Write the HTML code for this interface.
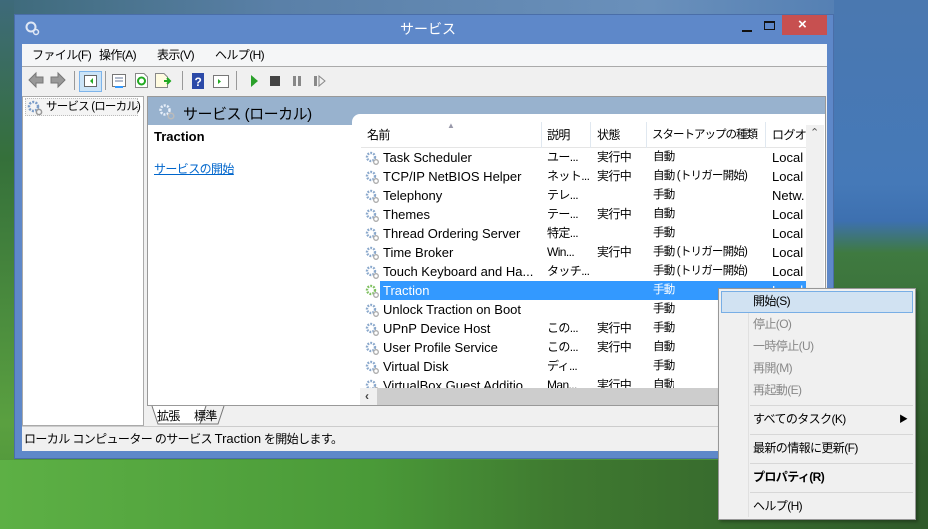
<!DOCTYPE html><html><head><meta charset="utf-8"><style>
*{margin:0;padding:0;box-sizing:border-box}
body{width:928px;height:529px;overflow:hidden;position:relative;font-family:"Liberation Sans","Noto Sans CJK JP",sans-serif;font-size:12px;color:#000;
background:linear-gradient(180deg,#6f8fb5 0,#4a78b0 10%,#3b6fb0 45%,#4c7fa8 50%,#3c7a3a 58%,#5aa040 75%,#3f8a30 100%)}
.a{position:absolute}
.g{position:absolute;width:14px;height:14px}
.t{position:absolute;white-space:nowrap;line-height:15px}
.j{letter-spacing:-0.6px}
</style></head><body>
<div class="a" style="left:0;top:0;width:928px;height:14px;background:linear-gradient(90deg,#3e6a7a,#5a80a8 30%,#6a90bb 70%,#4a78b0)"></div>
<div class="a" style="left:0;top:0;width:14px;height:529px;background:linear-gradient(180deg,#3e6a7a,#35703a 30%,#5aa040 80%,#4a9036)"></div>
<div class="a" style="left:0;top:460px;width:928px;height:69px;background:linear-gradient(90deg,#5db045,#4a9a38 40%,#3f7a30 60%,#2f5a2a)"></div>
<div class="a" style="left:834px;top:0;width:94px;height:460px;background:linear-gradient(180deg,#4a78b0 0,#4579b8 40%,#3d70b0 48%,#3f7a40 55%,#2f5a2a 100%)"></div>
<div class="a" style="left:14px;top:14px;width:820px;height:445px;background:#5e88c9;border:1px solid #4a6ea8"></div>
<svg class="a" style="left:24px;top:20px" width="16" height="16"><circle cx="7" cy="7" r="4.5" fill="none" stroke="#e0e8f5" stroke-width="2"/><circle cx="12" cy="12" r="2.5" fill="none" stroke="#e0e8f5" stroke-width="1.5"/></svg>
<div class="t" style="left:400px;top:22px;font-size:14px;color:#fff">サービス</div>
<div class="a" style="left:742px;top:30px;width:10px;height:2px;background:#111"></div>
<div class="a" style="left:764px;top:21px;width:11px;height:9px;border:1px solid #111;border-top:2px solid #111"></div>
<div class="a" style="left:782px;top:15px;width:45px;height:20px;background:#c75050"></div>
<div class="t" style="left:798px;top:17px;font-size:15px;color:#fff;font-weight:bold">×</div>
<div class="a" style="left:22px;top:44px;width:805px;height:407px;background:#f0f0f0"></div>
<div class="a" style="left:22px;top:44px;width:805px;height:23px;background:#f5f6f7;border-bottom:1px solid #aaa"></div>
<div class="t j" style="left:32px;top:48px">ファイル(F)</div>
<div class="t j" style="left:99px;top:48px">操作(A)</div>
<div class="t j" style="left:157px;top:48px">表示(V)</div>
<div class="t j" style="left:215px;top:48px">ヘルプ(H)</div>
<svg class="a" style="left:22px;top:68px" width="320" height="26">
<path d="M7 12 L14 5 V9 H21 V15 H14 V19Z" fill="#999" stroke="#777"/>
<path d="M43 12 L36 5 V9 H29 V15 H36 V19Z" fill="#999" stroke="#777"/>
<line x1="52.5" y1="3" x2="52.5" y2="22" stroke="#999"/>
<rect x="57.5" y="3.5" width="22" height="20" fill="#cce4f7" stroke="#7eb4ea"/>
<rect x="62.5" y="7.5" width="12" height="11" fill="#fff" stroke="#666"/><path d="M71 10 L68 13 L71 16Z" fill="#2a2"/>
<line x1="83.5" y1="3" x2="83.5" y2="22" stroke="#999"/>
<rect x="90.5" y="6.5" width="13" height="12" fill="#fff" stroke="#777"/><line x1="93" y1="10" x2="101" y2="10" stroke="#679"/><line x1="93" y1="13" x2="101" y2="13" stroke="#679"/><rect x="93" y="18" width="8" height="2" fill="#39f"/>
<path d="M113.5 5.5 H122 L125.5 9 V19.5 H113.5Z" fill="#fff" stroke="#888"/><circle cx="119.5" cy="13" r="3.5" fill="none" stroke="#2a2" stroke-width="2"/>
<path d="M133.5 5.5 H142 L145.5 9 V19.5 H133.5Z" fill="#fffbe0" stroke="#888"/><path d="M142 13 L148 13 M145 10 L148 13 L145 16" stroke="#2a2" stroke-width="2" fill="none"/>
<line x1="160.5" y1="3" x2="160.5" y2="22" stroke="#999"/>
<rect x="170" y="5" width="12" height="16" fill="#2c4aa8"/><text x="172.5" y="18" font-size="12" fill="#fff" font-weight="bold" font-family="Liberation Sans">?</text>
<rect x="191.5" y="7.5" width="15" height="12" fill="#fff" stroke="#777"/><path d="M196 11 L199 13.5 L196 16Z" fill="#2a2"/>
<line x1="214.5" y1="3" x2="214.5" y2="22" stroke="#999"/>
<path d="M229 7 L236 13 L229 19Z" fill="#2aa02a"/>
<rect x="248" y="8" width="10" height="10" fill="#444"/>
<rect x="271" y="8" width="3" height="10" fill="#888"/><rect x="276" y="8" width="3" height="10" fill="#888"/>
<rect x="292" y="8" width="3" height="10" fill="#888"/><path d="M297 8 L303 13 L297 18Z" fill="none" stroke="#888"/>
</svg>
<div class="a" style="left:22px;top:96px;width:122px;height:330px;background:#fff;border:1px solid #aaa"></div>
<div class="a" style="left:25px;top:98px;width:113px;height:18px;border:1px dotted #bbb;background:#f4f4f4"></div>
<svg class="a" style="left:27px;top:100px" width="16" height="16"><circle cx="6.5" cy="6.5" r="4.5" fill="none" stroke="#7a9cc8" stroke-width="2.5" stroke-dasharray="2 1.3"/><circle cx="12" cy="12" r="2.6" fill="none" stroke="#999" stroke-width="1.5"/></svg>
<div class="t j" style="left:46px;top:100px;font-size:11.5px;letter-spacing:-0.8px">サービス (ローカル)</div>
<div class="a" style="left:147px;top:96px;width:679px;height:310px;background:#fff;border:1px solid #999"></div>
<div class="a" style="left:148px;top:97px;width:677px;height:28px;background:#98b2ce"></div>
<svg class="a" style="left:158px;top:103px" width="18" height="18"><circle cx="7" cy="7" r="4.5" fill="none" stroke="#e8f0fa" stroke-width="2.5" stroke-dasharray="2 1.3"/><circle cx="13" cy="13" r="2.8" fill="none" stroke="#bbb" stroke-width="1.5"/></svg>
<div class="t" style="left:183px;top:106px;font-size:15px;line-height:17px;letter-spacing:-0.5px">サービス (ローカル)</div>
<div class="a" style="left:148px;top:125px;width:677px;height:280px;background:#fff"></div>
<div class="a" style="left:352px;top:114px;width:473px;height:20px;background:#fff;border-radius:8px 0 0 0"></div>
<div class="t" style="left:154px;top:129px;font-weight:bold;font-size:13px">Traction</div>
<div class="t j" style="left:154px;top:162px;color:#0066cc;text-decoration:underline">サービスの開始</div>
<div class="a" style="left:361px;top:122px;width:445px;height:26px;border-bottom:1px solid #e5e5e5"></div>
<div class="a" style="left:541px;top:122px;width:1px;height:26px;background:#e0e8f0"></div>
<div class="a" style="left:590px;top:122px;width:1px;height:26px;background:#e0e8f0"></div>
<div class="a" style="left:646px;top:122px;width:1px;height:26px;background:#e0e8f0"></div>
<div class="a" style="left:765px;top:122px;width:1px;height:26px;background:#e0e8f0"></div>
<div class="t" style="left:447px;top:118px;font-size:8px;color:#99a">▲</div>
<div class="t j" style="left:367px;top:128px">名前</div>
<div class="t j" style="left:547px;top:128px">説明</div>
<div class="t j" style="left:597px;top:128px">状態</div>
<div class="t" style="left:652px;top:128px;font-size:11.5px;letter-spacing:-1px">スタートアップの種類</div>
<div class="t j" style="left:772px;top:128px;width:34px;overflow:hidden">ログオン</div>
<div class="a" style="left:806px;top:125px;width:18px;height:263px;background:#f0f0f0"></div>
<div class="t" style="left:810px;top:126px;font-size:11px;color:#555">⌃</div>
<div class="a" style="left:380px;top:281px;width:426px;height:19px;background:#3399ff"></div>
<div id="rows"></div>
<div class="a" style="left:360px;top:388px;width:446px;height:17px;background:#cdcdcd"></div>
<div class="a" style="left:360px;top:388px;width:17px;height:17px;background:#f0f0f0"></div>
<div class="t" style="left:365px;top:389px;font-size:12px;color:#444;font-weight:bold">‹</div>
<svg class="a" style="left:148px;top:406px" width="90" height="20"><path d="M4 0 L10 18 H52 L58 0" fill="#fff" stroke="#777"/><path d="M58 0 L52 18 H70 L76 0" fill="#f0f0f0" stroke="#777"/></svg>
<div class="t j" style="left:157px;top:409px">拡張</div>
<div class="t j" style="left:194px;top:409px">標準</div>
<div class="a" style="left:22px;top:426px;width:805px;height:1px;background:#ccc"></div>
<div class="t j" style="left:24px;top:431px">ローカル コンピューター のサービス <span style="letter-spacing:0;font-size:13px">Traction</span> を開始します。</div>
<div class="a" style="left:718px;top:288px;width:198px;height:232px;background:#f0f0f0;border:1px solid #979797;box-shadow:2px 2px 3px rgba(0,0,0,.3)"></div>
<div class="a" style="left:748px;top:291px;width:1px;height:226px;background:#e0e0e0"></div>
<div class="a" style="left:721px;top:291px;width:192px;height:22px;background:#d1e2f2;border:1px solid #78aee5"></div>
<div class="t j" style="left:753px;top:294px">開始(S)</div>
<div class="t j" style="left:753px;top:317px;color:#888">停止(O)</div>
<div class="t j" style="left:753px;top:339px;color:#888">一時停止(U)</div>
<div class="t j" style="left:753px;top:361px;color:#888">再開(M)</div>
<div class="t j" style="left:753px;top:383px;color:#888">再起動(E)</div>
<div class="a" style="left:750px;top:405px;width:163px;height:1px;background:#d7d7d7"></div>
<div class="t j" style="left:753px;top:412px">すべてのタスク(K)</div>
<div class="t" style="left:899px;top:412px;font-size:9px">▶</div>
<div class="a" style="left:750px;top:434px;width:163px;height:1px;background:#d7d7d7"></div>
<div class="t j" style="left:753px;top:441px">最新の情報に更新(F)</div>
<div class="a" style="left:750px;top:463px;width:163px;height:1px;background:#d7d7d7"></div>
<div class="t j" style="left:753px;top:470px;font-weight:bold">プロパティ(R)</div>
<div class="a" style="left:750px;top:492px;width:163px;height:1px;background:#d7d7d7"></div>
<div class="t j" style="left:753px;top:499px">ヘルプ(H)</div>
<script>
var d=[["Task Scheduler","ユー...","実行中","自動","Local"],["TCP/IP NetBIOS Helper","ネット...","実行中","自動 (トリガー開始)","Local"],["Telephony","テレ...","","手動","Netw."],["Themes","テー...","実行中","自動","Local"],["Thread Ordering Server","特定...","","手動","Local"],["Time Broker","Win...","実行中","手動 (トリガー開始)","Local"],["Touch Keyboard and Ha...","タッチ...","","手動 (トリガー開始)","Local"],["Traction","","","手動","Local"],["Unlock Traction on Boot","","","手動",""],["UPnP Device Host","この...","実行中","手動",""],["User Profile Service","この...","実行中","自動",""],["Virtual Disk","ディ...","","手動",""],["VirtualBox Guest Additio","Man...","実行中","自動",""]];
var h="";d.forEach(function(r,i){var y=150+i*19;if(y>380)return;var c=i==7?"color:#fff;":"";var clip=y+15>388?"height:"+(388-y)+"px;overflow:hidden;":"";
h+='<svg class="g" style="left:365px;top:'+(y+1)+'px" viewBox="0 0 14 14"><circle cx="6" cy="6" r="4" fill="none" stroke="'+(i==7?"#7fc060":"#8aa8cc")+'" stroke-width="2.4" stroke-dasharray="1.8 1.2"/><circle cx="11" cy="11" r="2.3" fill="none" stroke="#aaa" stroke-width="1.3"/></svg>';
var xs=[383,547,597,653,772];r.forEach(function(t,j){if(t){var st=(j==0||j==4)?"font-size:13px;":"letter-spacing:-0.6px;";if(j==3)st="font-size:11.5px;letter-spacing:-0.8px;";h+='<div class="t" style="'+st+c+clip+'left:'+xs[j]+'px;top:'+(y)+'px">'+t+'</div>';}});});
document.getElementById("rows").innerHTML=h;
</script>
</body></html>
